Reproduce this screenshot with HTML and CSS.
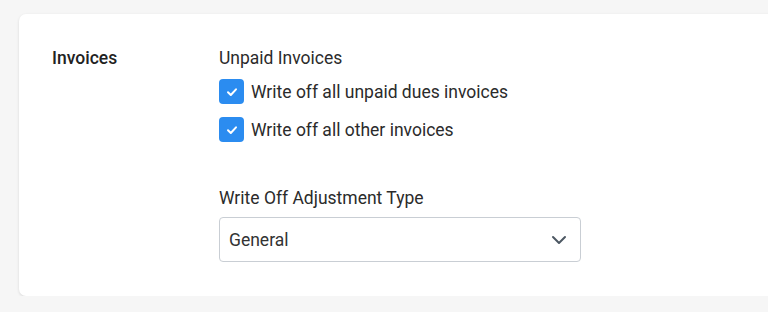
FILE: index.html
```html
<!DOCTYPE html>
<html>
<head>
<meta charset="utf-8">
<link rel="stylesheet" href="styles.css">
</head>
<body>
<div class="card">
  <div class="section">
    <div class="section-label">Invoices</div>
    <div class="section-body">
      <div class="group-label">Unpaid Invoices</div>
      <label class="check-row">
        <span class="checkbox"><svg width="14" height="14" viewBox="0 0 14 14"><path d="M3 7.3 L5.8 10 L11 4.3" fill="none" stroke="#fff" stroke-width="2" stroke-linecap="round" stroke-linejoin="round"/></svg></span>
        <span>Write off all unpaid dues invoices</span>
      </label>
      <label class="check-row">
        <span class="checkbox"><svg width="14" height="14" viewBox="0 0 14 14"><path d="M3 7.3 L5.8 10 L11 4.3" fill="none" stroke="#fff" stroke-width="2" stroke-linecap="round" stroke-linejoin="round"/></svg></span>
        <span>Write off all other invoices</span>
      </label>
      <div class="field-label">Write Off Adjustment Type</div>
      <div class="select">
        <span>General</span>
        <svg class="chev" width="16" height="10" viewBox="0 0 16 10"><path d="M2 2 L8 8 L14 2" fill="none" stroke="#4d5863" stroke-width="2" stroke-linecap="round" stroke-linejoin="round"/></svg>
      </div>
    </div>
  </div>
</div>
</body>
</html>
```
FILE: styles.css
```css
html, body {
  margin: 0;
  padding: 0;
}
body {
  background: #f6f6f6;
  font-family: Roboto, "Liberation Sans", sans-serif;
  font-size: 17.5px;
  color: #2b2b2b;
  padding: 14px 0 0 19px;
  overflow: hidden;
}
.card {
  width: 800px;
  background: #fff;
  border-radius: 7px;
  box-shadow: 0 1px 3px rgba(0,0,0,0.12);
  padding: 34px 0 34px 33px;
  box-sizing: border-box;
}
.section {
  display: flex;
  line-height: 20px;
}
.section-label {
  width: 167px;
  flex: none;
  font-weight: 500;
  color: #222;
}
.section-body {
  display: flex;
  flex-direction: column;
}
.group-label {
  margin-bottom: 11px;
}
.check-row {
  display: flex;
  align-items: center;
  gap: 7px;
  height: 25px;
  margin-bottom: 13px;
}
.checkbox {
  width: 25px;
  height: 25px;
  border-radius: 4px;
  background: #2b8cf0;
  display: flex;
  align-items: center;
  justify-content: center;
}
.field-label {
  margin-top: 33px;
  margin-bottom: 9px;
}
.select {
  width: 362px;
  height: 45px;
  box-sizing: border-box;
  border: 1px solid #c9ced4;
  border-radius: 4px;
  display: flex;
  align-items: center;
  justify-content: space-between;
  padding: 0 13px 0 9px;
  color: #333;
}
.chev {
  display: block;
}
```
